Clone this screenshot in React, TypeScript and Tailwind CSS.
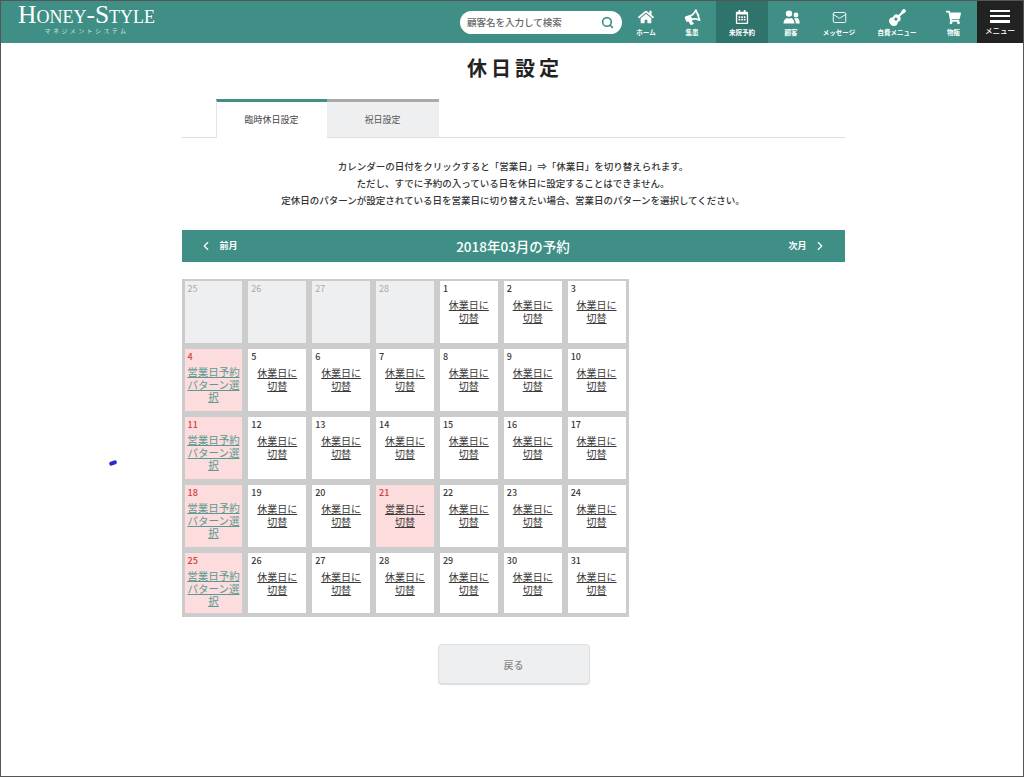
import { ChevronLeft, ChevronRight, Mail, Search } from "lucide-react";
import { FaBullhorn, FaGuitar, FaHome, FaRegCalendarAlt, FaShoppingCart } from "react-icons/fa";

function CustomersIcon() {
  return (
    <svg width="17" height="15" viewBox="0 0 17 15" fill="currentColor">
      <circle cx="6" cy="3.6" r="3.2" />
      <path d="M0.5 13.5c0-3.4 2-5.2 3.6-5.6 1.2 0.7 2.6 0.7 3.8 0 1.6 0.4 3.6 2.2 3.6 5.6z" />
      <circle cx="13" cy="5" r="2.4" />
      <path d="M12.8 13.5c0-2.2-0.7-3.8-1.8-4.8 0.5-0.4 0.8-0.6 1.1-0.7 0.7 0.5 1.5 0.5 2.2 0 1.3 0.4 2.4 2 2.4 5.5z" />
    </svg>
  );
}

const navItems = [
  { label: "ホーム", icon: <FaHome size={16} />, width: "w-[44px]" },
  { label: "集患", icon: <FaBullhorn size={15} className="-rotate-[20deg]" />, width: "w-[48px]" },
  { label: "来院予約", icon: <FaRegCalendarAlt size={14} />, width: "w-[52px]", active: true },
  { label: "顧客", icon: <CustomersIcon />, width: "w-[46px]" },
  { label: "メッセージ", icon: <Mail size={15} strokeWidth={1.5} />, width: "w-[50px]" },
  { label: "自費メニュー", icon: <FaGuitar size={17} />, width: "w-[66px]" },
  { label: "物販", icon: <FaShoppingCart size={15} />, width: "w-[47px]" },
];

type Day = { n: number; kind: "off" | "normal" | "pattern" | "holiday" };

const days: Day[] = [
  { n: 25, kind: "off" },
  { n: 26, kind: "off" },
  { n: 27, kind: "off" },
  { n: 28, kind: "off" },
  ...Array.from({ length: 31 }, (_, i): Day => {
    const n = i + 1;
    if (n === 4 || n === 11 || n === 18 || n === 25) return { n, kind: "pattern" };
    if (n === 21) return { n, kind: "holiday" };
    return { n, kind: "normal" };
  }),
];

function DayCell({ day }: { day: Day }) {
  const height = day.kind !== "off" && day.n >= 25 ? "h-[60px]" : "h-[62px]";
  if (day.kind === "off") {
    return (
      <div className="h-[62px] bg-[#eeeff0] px-[3px] pt-[1px] text-[9px] leading-[14px] text-[#aaaaaa]">{day.n}</div>
    );
  }
  if (day.kind === "pattern") {
    return (
      <div className={`${height} bg-[#fcdcdc] px-[2px] pt-[1px] text-[9px] leading-[14px]`}>
        <div className="pl-[1px] font-medium text-[#d04040]">{day.n}</div>
        <a className="mt-[2px] block text-center text-[10.5px] leading-[12.5px] text-[#5a9a92] underline">
          営業日予約パターン選択
        </a>
      </div>
    );
  }
  const pink = day.kind === "holiday";
  return (
    <div className={`${height} ${pink ? "bg-[#fcdcdc]" : "bg-white"} px-[3px] pt-[1px] text-[9px] leading-[14px]`}>
      <div className={pink ? "font-medium text-[#d04040]" : "font-medium text-[#3a3a3a]"}>{day.n}</div>
      <a className="mx-auto mt-[2px] block w-[40px] text-center text-[10px] leading-[13px] text-[#3a3a3a] underline">
        {pink ? "営業日に切替" : "休業日に切替"}
      </a>
    </div>
  );
}

export default function App() {
  return (
    <div className="relative flex h-[777px] w-[1024px] flex-col overflow-hidden border border-[#555555] bg-white font-['Noto_Sans_CJK_JP','Noto_Sans',sans-serif] text-[#333333]">
      <header className="flex h-[42px] shrink-0 items-stretch bg-[#3f8f86] text-white">
        <div className="flex w-[459px] flex-col pl-[17px] pt-[2px]">
          <div className="whitespace-nowrap font-['Liberation_Serif',serif] text-[25.5px] leading-[24px] [font-variant:small-caps]">Honey-Style</div>
          <div className="w-[137px] text-center text-[6px] leading-[8px] tracking-[2.4px] text-[#cfe5e2]">マネジメントシステム</div>
        </div>
        <div className="mt-[10px] flex h-[23px] w-[162px] items-center justify-between rounded-full bg-white pl-[7px] pr-[8px]">
          <span className="whitespace-nowrap text-[9.5px] font-medium text-[#666666]">顧客名を入力して検索</span>
          <Search size={13} strokeWidth={3} className="text-[#3f8f86]" />
        </div>
        <nav className="ml-auto flex">
          {navItems.map((item) => (
            <div
              key={item.label}
              className={`flex flex-col items-center justify-center gap-[2px] ${item.width} ${item.active ? "bg-[#2f746c]" : ""}`}
            >
              <div className="flex h-[17px] items-center">{item.icon}</div>
              <span className="whitespace-nowrap text-[6.5px] font-bold leading-[8px]">{item.label}</span>
            </div>
          ))}
          <div className="flex w-[46px] flex-col items-center justify-center gap-[3px] bg-[#222222]">
            <div className="flex h-[13px] w-[20px] flex-col justify-between">
              <span className="h-[2.5px] bg-white" />
              <span className="h-[2.5px] bg-white" />
              <span className="h-[2.5px] bg-white" />
            </div>
            <span className="text-[7.5px] font-medium leading-[9px]">メニュー</span>
          </div>
        </nav>
      </header>

      <main className="flex flex-col items-center pl-[2px]">
        <h1 className="mt-[11px] pl-[4px] text-[20px] font-bold leading-[28px] tracking-[4px] text-[#222222]">休日設定</h1>

        <div className="mt-[17px] w-[663px] border-b border-[#dddddd] pl-[34px]">
          <div className="flex">
            <div className="-mb-px flex h-[39px] w-[111px] items-center justify-center border-t-[3px] border-l border-[#3f8f86] border-l-[#e5e5e5] bg-white text-[9px] text-[#444444]">
              臨時休日設定
            </div>
            <div className="flex h-[38px] w-[112px] items-center justify-center border-t-[3px] border-[#aaaaaa] bg-[#eeeff0] text-[9px] text-[#555555]">
              祝日設定
            </div>
          </div>
        </div>

        <div className="mt-[20px] text-center text-[9.5px] font-medium leading-[17px] text-[#333333]">
          <p>カレンダーの日付をクリックすると「営業日」⇒「休業日」を切り替えられます。</p>
          <p>ただし、すでに予約の入っている日を休日に設定することはできません。</p>
          <p>定休日のパターンが設定されている日を営業日に切り替えたい場合、営業日のパターンを選択してください。</p>
        </div>

        <div className="mt-[21px] flex h-[32px] w-[663px] items-center justify-between bg-[#3f8f86] pl-[17px] pr-[17px] text-white">
          <div className="flex items-center gap-[7px]">
            <ChevronLeft size={14} strokeWidth={2} />
            <span className="text-[9px] font-bold">前月</span>
          </div>
          <div className="text-[13.5px] font-medium">2018年03月の予約</div>
          <div className="flex items-center gap-[7px]">
            <span className="text-[9px] font-bold">次月</span>
            <ChevronRight size={14} strokeWidth={2} />
          </div>
        </div>

        <div className="mt-[17px] w-[663px]">
          <div className="grid w-[447px] grid-cols-7 gap-[6px] bg-[#cccccc] px-[3px] pb-[4px] pt-[2px]">
            {days.map((day) => (
              <DayCell key={`${day.kind}-${day.n}`} day={day} />
            ))}
          </div>
        </div>

        <button className="ml-[1px] mt-[27px] h-[40px] w-[152px] rounded-[4px] border border-[#e0e0e0] bg-[#eeeff0] text-[10px] font-medium text-[#888888] shadow-[0_1px_1px_#dddddd]">
          戻る
        </button>
      </main>

      <span className="absolute left-[108px] top-[460px] h-[4px] w-[8px] -rotate-[20deg] rounded-full bg-[#2a2ad0]" />
    </div>
  );
}
